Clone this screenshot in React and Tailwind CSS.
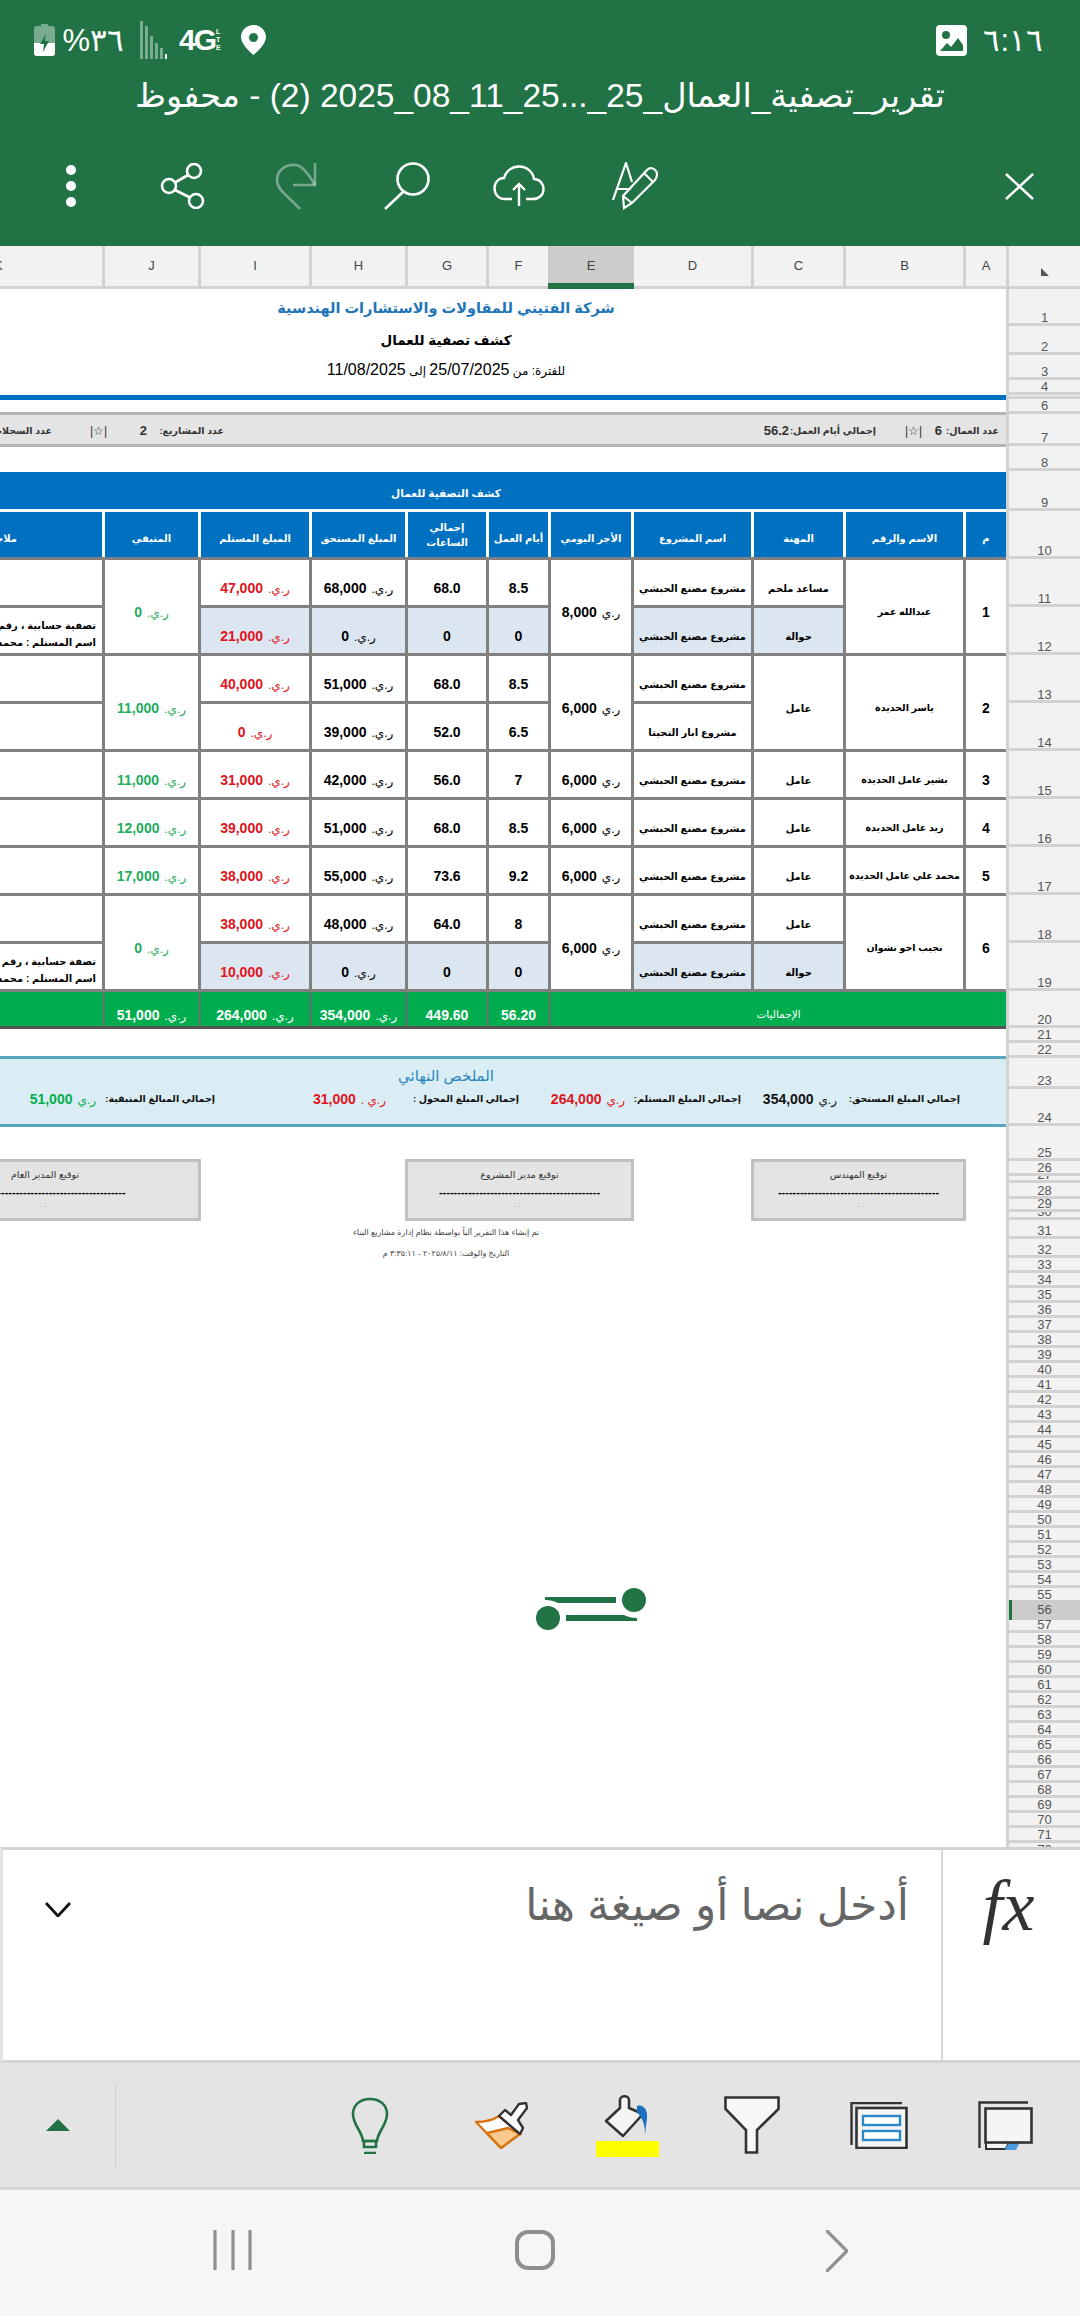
const FONT = "font-['Liberation_Sans','DejaVu_Sans',sans-serif]";
const GRID = 'grid grid-cols-[102px_93px_108px_93px_78px_59px_80px_117px_89px_117px_40px] gap-x-[3px]';

const NOTE_ONE = ['تصفية حسابية ، رقم الحساب', 'اسم المستلم : محمد'];
const NOTE_SIX = ['تصفة حسابية ، رقم الحساب', 'اسم المستلم : محمد'];
const HABASHI = 'مشروع مصنع الحبشي';

const workers = [
  {
    n: '1', name: 'عبدالله عمر', rate: '8,000', remain: '0',
    lines: [
      { recv: '47,000', due: '68,000', hours: '68.0', days: '8.5', proj: HABASHI, job: 'مساعد ملحم' },
      { note: NOTE_ONE, recv: '21,000', due: '0', hours: '0', days: '0', proj: HABASHI, job: 'حوالة', transfer: true },
    ],
  },
  {
    n: '2', name: 'ياسر الحديدة', rate: '6,000', remain: '11,000', mergeJob: 'عامل',
    lines: [
      { recv: '40,000', due: '51,000', hours: '68.0', days: '8.5', proj: HABASHI },
      { recv: '0', due: '39,000', hours: '52.0', days: '6.5', proj: 'مشروع ابار التحيتا' },
    ],
  },
  { n: '3', name: 'بشير عامل الحديدة', rate: '6,000', remain: '11,000', lines: [{ recv: '31,000', due: '42,000', hours: '56.0', days: '7', proj: HABASHI, job: 'عامل' }] },
  { n: '4', name: 'زيد عامل الحديدة', rate: '6,000', remain: '12,000', lines: [{ recv: '39,000', due: '51,000', hours: '68.0', days: '8.5', proj: HABASHI, job: 'عامل' }] },
  { n: '5', name: 'محمد علي عامل الحديدة', rate: '6,000', remain: '17,000', lines: [{ recv: '38,000', due: '55,000', hours: '73.6', days: '9.2', proj: HABASHI, job: 'عامل' }] },
  {
    n: '6', name: 'نجيب اخو نشوان', rate: '6,000', remain: '0',
    lines: [
      { recv: '38,000', due: '48,000', hours: '64.0', days: '8', proj: HABASHI, job: 'عامل' },
      { note: NOTE_SIX, recv: '10,000', due: '0', hours: '0', days: '0', proj: HABASHI, job: 'حوالة', transfer: true },
    ],
  },
];

const columnLabels = ['J', 'I', 'H', 'G', 'F', 'E', 'D', 'C', 'B', 'A'];

// row header: height of each cell above its 3px separator
const fixedRows = [34, 26, 22, 12, 1, 12, 29, 22, 37, 45, 45, 45, 45, 45, 45, 45, 45, 45, 45, 34, 12, 12, 28, 34, 32, 12, 4, 13, 10, 5, 16, 16, 12];
const rowHeaders = [];
for (let i = 1; i <= 72; i++) {
  let h = 12;
  if (i <= fixedRows.length) h = fixedRows[i - 1];
  if (i === 56) h = 20;
  if (i === 57) h = 10;
  rowHeaders.push({ n: i, h });
}

function Money({ value, unit = 'ر.ي.', numClass = 'text-[14px]' }) {
  return (
    <span dir="rtl" className="flex items-baseline gap-[5px] whitespace-nowrap">
      <span className="text-[12px] font-normal">{unit}</span>
      <span className={`${numClass} font-bold`}>{value}</span>
    </span>
  );
}

function Cell({ children, className = '' }) {
  return (
    <div className={`flex items-center justify-center pt-3 ${className}`}>
      {children}
    </div>
  );
}

function TableRows() {
  return workers.flatMap((w) =>
    w.lines.flatMap((l, i) => {
      const span = w.lines.length > 1 ? 'row-span-2' : '';
      const tint = l.transfer ? 'bg-[#dce6f1]' : 'bg-white';
      return [
        <div key={`${w.n}${i}k`} dir="rtl" className="flex flex-col justify-center overflow-hidden bg-white pt-[7px] pr-[6px] text-[10px] leading-[17px] font-bold whitespace-nowrap">
          {l.note && l.note.map((t) => <span key={t}>{t}</span>)}
        </div>,
        i === 0 && <Cell key={`${w.n}j`} className={`${span} bg-white text-[#1fae5c]`}><Money value={w.remain} /></Cell>,
        <Cell key={`${w.n}${i}i`} className={`${tint} text-[#e0141c]`}><Money value={l.recv} /></Cell>,
        <Cell key={`${w.n}${i}h`} className={tint}><Money value={l.due} /></Cell>,
        <Cell key={`${w.n}${i}g`} className={`${tint} text-[14px] font-bold`}>{l.hours}</Cell>,
        <Cell key={`${w.n}${i}f`} className={`${tint} text-[14px] font-bold`}>{l.days}</Cell>,
        i === 0 && <Cell key={`${w.n}e`} className={`${span} bg-white`}><Money value={w.rate} unit="ر.ي" /></Cell>,
        <Cell key={`${w.n}${i}d`} className={`${tint} text-[10px] font-bold whitespace-nowrap`}>{l.proj}</Cell>,
        w.mergeJob
          ? i === 0 && <Cell key={`${w.n}c`} className={`${span} bg-white text-[10px] font-bold`}>{w.mergeJob}</Cell>
          : <Cell key={`${w.n}${i}c`} className={`${tint} text-[10px] font-bold`}>{l.job}</Cell>,
        i === 0 && <Cell key={`${w.n}b`} className={`${span} bg-white text-[9.5px] font-bold whitespace-nowrap`}>{w.name}</Cell>,
        i === 0 && <Cell key={`${w.n}a`} className={`${span} bg-white text-[14px] font-bold`}>{w.n}</Cell>,
      ];
    })
  );
}

function StatusBar() {
  return (
    <div className="flex h-[80px] items-center text-white">
      <div className="ml-[34px] flex items-center">
        <svg width="21" height="32" viewBox="0 0 21 32">
          <path d="M7 0h7v2h4a3 3 0 0 1 3 3v24a3 3 0 0 1-3 3H3a3 3 0 0 1-3-3V5a3 3 0 0 1 3-3h4z" fill="#fff" fillOpacity=".4" />
          <path d="M0 19h21v10a3 3 0 0 1-3 3H3a3 3 0 0 1-3-3z" fill="#fff" />
          <path d="M12 10l-6 10h4l-1 8 6-11h-4z" fill="#217346" />
        </svg>
        <span dir="rtl" className="ml-[7px] w-[62px] text-[31px] leading-none font-light">٣٦%</span>
        <svg className="ml-[16px]" width="27" height="38" viewBox="0 0 27 38" fill="#fff" fillOpacity=".4">
          <rect x="0" y="0" width="3" height="38" />
          <rect x="5" y="5" width="3" height="33" />
          <rect x="10" y="15" width="3" height="23" />
          <rect x="15" y="22" width="3" height="16" />
          <rect x="20" y="27" width="3" height="11" />
          <rect x="25" y="33" width="2" height="5" fillOpacity="1" />
        </svg>
        <span className="ml-[12px] text-[30px] leading-none font-bold tracking-[-2px]">4G</span>
        <span className="ml-[1px] flex w-[9px] flex-col text-[7px] leading-[8px] font-bold">
          <span>L</span><span>T</span><span>E</span>
        </span>
        <svg className="ml-[16px]" width="25" height="30" viewBox="0 0 25 30">
          <path fillRule="evenodd" d="M12.5 0C5.6 0 0 5.4 0 12c0 8 12.5 18 12.5 18S25 20 25 12C25 5.4 19.4 0 12.5 0zm0 8a4.5 4.5 0 1 1 0 9 4.5 4.5 0 0 1 0-9z" fill="#fff" />
        </svg>
      </div>
      <svg className="ml-auto" width="31" height="31" viewBox="0 0 31 31">
        <rect width="31" height="31" rx="4" fill="#fff" />
        <circle cx="10" cy="10" r="4" fill="#217346" />
        <path d="M4 26l7-8 4 4 7-9 5 7v6z" fill="#217346" />
      </svg>
      <span dir="rtl" className="mr-[37px] ml-[16px] text-[31px] leading-none font-light">٦:١٦</span>
    </div>
  );
}

function AppToolbar() {
  return (
    <div className="mt-[48px] flex items-center text-white">
      <svg className="ml-[66px]" width="10" height="42" viewBox="0 0 10 42" fill="#fff">
        <circle cx="5" cy="5" r="5" />
        <circle cx="5" cy="21" r="5" />
        <circle cx="5" cy="37" r="5" />
      </svg>
      <svg className="ml-[84px]" width="46" height="46" viewBox="0 0 46 46" fill="none" stroke="#fff" strokeWidth="2.6">
        <circle cx="34" cy="8" r="7" />
        <circle cx="9" cy="23" r="7" />
        <circle cx="36" cy="38" r="7" />
        <path d="M28 12L15 19.500M15 27L30 34.500" />
      </svg>
      <svg className="ml-[68px]" width="44" height="48" viewBox="0 0 44 48" fill="none" stroke="#fff" strokeOpacity=".38" strokeWidth="2.6">
        <path d="M26 47C14 34 3 28 3 18 3 8 12 2 22 3c6 .6 12 8 19 20" />
        <path d="M41 1V23H19" />
      </svg>
      <svg className="ml-[66px]" width="46" height="48" viewBox="0 0 46 48" fill="none" stroke="#fff" strokeWidth="2.6">
        <circle cx="29" cy="17" r="15.500" />
        <path d="M19 30L1 47" />
      </svg>
      <svg className="ml-[63px]" width="52" height="42" viewBox="0 0 52 42" fill="none" stroke="#fff" strokeWidth="2.4">
        <path d="M19 34H12C5 34 1.500 29 1.500 23 1.500 17 6 13 11 13 13 6 19 1.500 26 1.500 34 1.500 40 7 41 14 47 14 50.500 19 50.500 24 50.500 30 46 34 40 34H33" />
        <path d="M26 41V19M20 25L26 19L32 25" />
      </svg>
      <svg className="ml-[67px]" width="46" height="48" viewBox="0 0 46 48" fill="none" stroke="#fff" strokeWidth="2.2">
        <path d="M1 38L14 1 20 20M5 27H19" />
        <path d="M12 46L11 34 35 8C38 5 42 6 44 9 46 12 45 15 43 18L20 41zM11 34L20 41M32 11L41 20" />
      </svg>
      <svg className="mr-[46px] ml-auto" width="29" height="27" viewBox="0 0 29 27" fill="none" stroke="#fff" strokeWidth="2.4">
        <path d="M1 1L28 26M28 1L1 26" />
      </svg>
    </div>
  );
}

function RowHeaders() {
  return (
    <div className="w-[74px] shrink-0 overflow-hidden border-l-[3px] border-[#d2d2d2] bg-[#f2f2f2]">
      {rowHeaders.map((r) => (
        <div key={r.n} className={r.n === 56 ? 'relative bg-[#cccccc]' : r.n === 55 ? '' : 'border-b-[3px] border-[#d2d2d2]'}>
          {r.n === 56 && <div className="absolute top-0 -left-[3px] h-full w-[6px] bg-[#217346]" />}
          <div
            className={`flex justify-center overflow-hidden text-[13px] leading-[10px] text-[#555] ${r.n === 56 ? 'items-center' : 'items-end'}`}
            style={{ height: r.h }}
          >
            {r.n}
          </div>
        </div>
      ))}
    </div>
  );
}

function SignBox({ label, className = '' }) {
  return (
    <div className={`flex h-[62px] flex-col items-center border-[3px] border-[#c0c0c0] bg-[#e4e4e4] text-[#333] ${className}`}>
      <span dir="rtl" className="mt-[7px] text-[9.5px] leading-[12px]">{label}</span>
      <span className="mt-[5px] text-[11px] leading-[12px] font-bold text-black">--------------------------------------------</span>
      <span className="mt-[1px] text-[8px] leading-[12px] text-[#999]">. : .</span>
    </div>
  );
}

function Sheet() {
  return (
    <div className="relative w-[1006px] shrink-0 overflow-hidden bg-white">
      {/* report title */}
      <div dir="rtl" className="flex flex-col items-center pt-[7px] pr-[114px]">
        <span className="text-[14.5px] leading-[24px] font-bold text-[#1f75b9]">شركة الفتيني للمقاولات والاستشارات الهندسية</span>
        <span className="mt-[10px] text-[13.5px] leading-[22px] font-bold text-black">كشف تصفية للعمال</span>
        <span className="mt-[8px] text-[12px] leading-[20px] text-black">
          للفترة: من <span className="text-[16px]">25/07/2025</span> إلى <span className="text-[16px]">11/08/2025</span>
        </span>
      </div>
      <div className="mt-[14px] h-[5px] bg-[#0070c0]" />

      {/* stats band */}
      <div dir="rtl" className="mt-[12px] flex h-[35px] items-center border-y-[3px] border-[#b4b4b4] bg-[#e4e4e4] pt-[3px] pr-[7px] text-[9.5px] font-bold whitespace-nowrap text-[#333]">
        <span className="w-[57px] shrink-0">عدد العمال:</span>
        <span className="w-[20px] shrink-0 text-[13px]">6</span>
        <span className="w-[46px] shrink-0 text-[12px] font-normal">|☆|</span>
        <span className="w-[87px] shrink-0">إجمالي أيام العمل:</span>
        <span className="w-[565px] shrink-0 text-[13px]">56.2</span>
        <span className="w-[77px] shrink-0">عدد المشاريع:</span>
        <span className="w-[40px] shrink-0 text-[13px]">2</span>
        <span className="w-[55px] shrink-0 text-[12px] font-normal">|☆|</span>
        <span>عدد السجلات: 8</span>
      </div>

      <div className="mt-[25px] flex h-[37px] items-center justify-center bg-[#0070c0] pt-[7px] pr-[114px] text-[10.5px] font-bold text-white">
        <span dir="rtl">كشف التصفية للعمال</span>
      </div>

      {/* column titles */}
      <div className={`${GRID} mt-[3px] h-[45px] bg-white text-[10px] leading-[15px] font-bold text-white`}>
        <div dir="rtl" className="flex items-center overflow-hidden bg-[#0070c0] pt-2 pr-[85px] whitespace-nowrap">ملاحظات</div>
        {['المتبقي', 'المبلغ المستلم', 'المبلغ المستحق', 'إجمالي الساعات', 'أيام العمل', 'الأجر اليومي', 'اسم المشروع', 'المهنة', 'الاسم والرقم', 'م'].map((t) => (
          <div key={t} dir="rtl" className={`flex items-center justify-center bg-[#0070c0] text-center ${t === 'إجمالي الساعات' ? 'px-[14px]' : 'pt-2'}`}>{t}</div>
        ))}
      </div>

      {/* workers */}
      <div className={`${GRID} auto-rows-[45px] gap-y-[3px] bg-[#808080] py-[3px] text-black`}>
        <TableRows />
      </div>

      {/* totals */}
      <div className={`${GRID} h-[37px] border-b-[3px] border-[#555] bg-[#4f7f62] text-white`}>
        <div className="bg-[#00ad4e]" />
        {['51,000', '264,000', '354,000'].map((v) => (
          <div key={v} className="flex items-center justify-center bg-[#00ad4e] pt-3"><Money value={v} /></div>
        ))}
        {['449.60', '56.20'].map((v) => (
          <div key={v} className="flex items-center justify-center bg-[#00ad4e] pt-3 text-[14px] font-bold">{v}</div>
        ))}
        <div dir="rtl" className="col-span-5 flex items-center justify-center bg-[#00ad4e] pt-3 text-[10.5px]">الإجماليات</div>
      </div>

      {/* summary */}
      <div dir="rtl" className="mt-[27px] h-[71px] border-y-[3px] border-[#57a7bd] bg-[#daedf4]">
        <div className="pt-[5px] pr-[114px] text-center text-[15px] leading-[24px] text-[#2a86c0]">الملخص النهائي</div>
        <div className="mt-[1px] flex h-[20px] items-center pr-[46px] text-[9.5px] font-bold whitespace-nowrap text-[#111]">
          <div className="flex w-[219px] items-center">
            <span className="w-[123px] shrink-0">إجمالي المبلغ المستحق:</span>
            <Money value="354,000" unit="ر.ي" />
          </div>
          <div className="flex w-[222px] items-center">
            <span className="w-[116px] shrink-0">إجمالي المبلغ المستلم:</span>
            <span className="text-[#e0141c]"><Money value="264,000" unit="ر.ي" /></span>
          </div>
          <div className="flex w-[304px] items-center">
            <span className="w-[133px] shrink-0">إجمالي المبلغ المحول :</span>
            <span className="text-[#e0141c]"><Money value="31,000" unit="ر.ي ." /></span>
          </div>
          <div className="flex items-center">
            <span className="w-[119px] shrink-0">إجمالي المبالغ المتبقية:</span>
            <span className="text-[#00ad4e]"><Money value="51,000" unit="ر.ي" /></span>
          </div>
        </div>
      </div>

      {/* signatures */}
      <div className="mt-[32px] flex">
        <SignBox label="توقيع المدير العام" className="-ml-[111px] w-[312px] shrink-0" />
        <SignBox label="توقيع مدير المشروع" className="ml-[204px] w-[229px] shrink-0" />
        <SignBox label="توقيع المهندس" className="ml-[117px] w-[215px] shrink-0" />
      </div>

      <div dir="rtl" className="pr-[114px] text-center text-[8px] leading-[14px] text-[#444]">
        <div className="mt-[5px]">تم إنشاء هذا التقرير آلياً بواسطة نظام إدارة مشاريع البناء</div>
        <div className="mt-[7px]">التاريخ والوقت: ٢٠٢٥/٨/١١ - ٣:٣٥:١١ م</div>
      </div>

      <svg className="absolute top-[1295px] left-[530px]" width="120" height="50" viewBox="0 0 120 50" fill="#217346">
        <path d="M15 13H86V19H28C24 17 20 16 15 16z" />
        <path d="M36 31H94C98 33 102 34 107 34V37H36z" />
        <circle cx="18" cy="34" r="12" />
        <circle cx="104" cy="16" r="12" />
      </svg>
    </div>
  );
}

function FormulaBar() {
  return (
    <div className="flex h-[216px] shrink-0 border-y-[3px] border-t-[#d2d2d2] border-b-[#d4d4d4] border-l-[3px] border-l-[#e4e4e4] bg-white">
      <svg className="mt-[52px] ml-[42px]" width="26" height="15" viewBox="0 0 26 15" fill="none" stroke="#111" strokeWidth="2.8">
        <path d="M1 1L13 14 25 1" />
      </svg>
      <div dir="rtl" className="flex-1 pt-[28px] pr-[32px] text-[44px] leading-[54px] text-[#666]">
        أدخل نصا أو صيغة هنا
      </div>
      <div className="flex w-[139px] shrink-0 justify-center border-l-[2px] border-[#d8d8d8] pt-[16px] pr-[6px] font-['Liberation_Serif',serif] text-[72px] leading-[80px] text-[#333] italic">
        fx
      </div>
    </div>
  );
}

function BottomToolbar() {
  return (
    <div className="flex h-[127px] shrink-0 items-center border-b-[3px] border-[#d4d4d4] bg-[#e4e4e4]">
      <div className="ml-[46px] h-0 w-0 border-x-[12px] border-b-[12px] border-x-transparent border-b-[#217346]" />
      <div className="ml-[45px] h-[84px] w-[1px] bg-[#cfcfcf]" />
      <svg className="ml-[235px]" width="38" height="57" viewBox="0 0 38 57" fill="none" stroke="#217346" strokeWidth="2.6">
        <path d="M12 44C11 34 2 28 2 17 2 8 9 2 19 2 29 2 36 8 36 17 36 28 27 34 26 44z" />
        <path d="M13 44H25V50H13zM13 56H25" />
      </svg>
      <svg className="ml-[86px]" width="55" height="47" viewBox="0 0 55 47" fill="none">
        <path d="M1 20L26 46 45 32 24 14C18 18 9 20 1 20z" fill="#fff" stroke="#d9730d" strokeWidth="2.4" />
        <path d="M12 31L26 46 45 32 33 26z" fill="#fbc98b" stroke="#d9730d" strokeWidth="2.4" />
        <path d="M24 14L30 8 36 13 44 2 51 1 52 6 43 18 48 26 45 32z" fill="#fff" stroke="#333" strokeWidth="2.4" strokeLinejoin="round" />
      </svg>
      <svg className="ml-[66px]" width="63" height="63" viewBox="0 0 63 63" fill="none">
        <path d="M10 27L24 14V6C24 1 33 1 33 6V14L47 20 27 42z" fill="#f5f5f5" stroke="#333" strokeWidth="2.6" strokeLinejoin="round" />
        <path d="M41 12C47 10 52 16 51 24L49 41C49 32 48 26 41 18z" fill="#1a6fc0" />
        <rect x="0" y="47" width="63" height="16" fill="#ffff00" />
      </svg>
      <svg className="ml-[65px]" width="56" height="58" viewBox="0 0 56 58" fill="#f7f7f7" stroke="#333" strokeWidth="2.6">
        <path d="M1.500 1.500H54.500V13L33 34V56.500H22V34L1.500 13z" />
      </svg>
      <svg className="ml-[70px]" width="58" height="47" viewBox="0 0 58 47" fill="none">
        <path d="M52 1H1.500V43" stroke="#333" strokeWidth="2.4" />
        <rect x="6.500" y="6" width="50" height="40" fill="#f5f5f5" stroke="#333" strokeWidth="2.6" />
        <rect x="13" y="14" width="37" height="9" fill="#fff" stroke="#2a88c8" strokeWidth="2.4" />
        <rect x="13" y="29" width="37" height="9" fill="#fff" stroke="#2a88c8" strokeWidth="2.4" />
      </svg>
      <svg className="ml-[70px]" width="55" height="49" viewBox="0 0 55 49" fill="none">
        <path d="M50 1.500H1.500V47" stroke="#333" strokeWidth="2.4" />
        <path d="M8 41V48H28L31 41z" fill="#f5f5f5" stroke="#333" strokeWidth="2" />
        <path d="M31 41H42L38 49H27z" fill="#4d9bdc" />
        <rect x="7.500" y="7.500" width="46" height="34" fill="#f5f5f5" stroke="#333" strokeWidth="2.6" />
      </svg>
    </div>
  );
}

function NavBar() {
  return (
    <div className="flex h-[126px] shrink-0 items-start bg-[#f6f6f6] pt-[40px]">
      <svg className="ml-[213px]" width="40" height="40" viewBox="0 0 40 40" stroke="#8f8f8f" strokeWidth="3.200" strokeLinecap="round">
        <path d="M2 1V39M20 1V39M37 1V39" />
      </svg>
      <svg className="ml-[262px]" width="40" height="40" viewBox="0 0 40 40" fill="none" stroke="#8f8f8f" strokeWidth="4">
        <rect x="2" y="2" width="36" height="36" rx="11" />
      </svg>
      <svg className="ml-[271px]" width="22" height="42" viewBox="0 0 22 42" fill="none" stroke="#8f8f8f" strokeWidth="3.200" strokeLinecap="round">
        <path d="M1 1L21 21 1 41" />
      </svg>
    </div>
  );
}

export default function App() {
  return (
    <div className={`flex h-[2316px] w-[1080px] flex-col overflow-hidden bg-white ${FONT}`}>
      {/* green app header */}
      <div className="h-[246px] shrink-0 bg-[#217346]">
        <StatusBar />
        <div dir="rtl" className="-mt-[2px] flex h-[36px] items-center justify-center text-[33.5px] whitespace-nowrap text-white">
          تقرير_تصفية_العمال_25_...25_11_08_2025 (2) - محفوظ
        </div>
        <AppToolbar />
      </div>

      {/* column letters */}
      <div className="flex h-[43px] shrink-0 border-b-[3px] border-[#d2d2d2] bg-[#d2d2d2]">
        <div className={`${GRID} w-[1006px] shrink-0 text-[13px] text-[#444]`}>
          <div className="flex items-center overflow-hidden bg-[#f2f2f2]"><span className="-ml-[6px]">K</span></div>
          {columnLabels.map((c) => (
            <div key={c} className={c === 'E' ? 'relative -mx-[3px] -mb-[3px] flex items-center justify-center border-b-[6px] border-[#217346] bg-[#cccccc] pt-[3px]' : 'flex items-center justify-center bg-[#f2f2f2]'}>
              {c}
            </div>
          ))}
        </div>
        <div className="ml-[3px] flex flex-1 items-end justify-center bg-[#f2f2f2] pb-[10px]">
          <div className="h-0 w-0 border-t-[8px] border-l-[8px] border-t-transparent border-l-[#555]" />
        </div>
      </div>

      <div className="flex min-h-0 flex-1">
        <Sheet />
        <RowHeaders />
      </div>

      <FormulaBar />
      <BottomToolbar />
      <NavBar />
    </div>
  );
}
